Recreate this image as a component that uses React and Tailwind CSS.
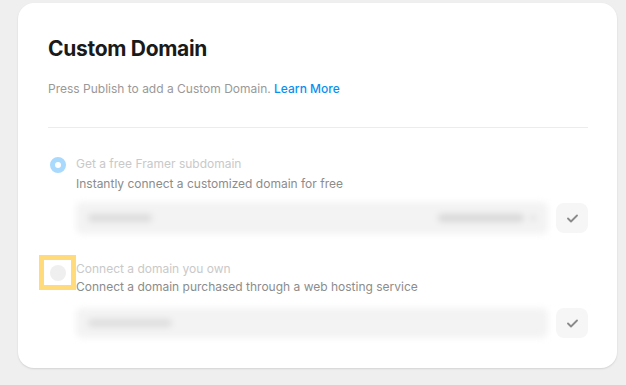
const CheckButton = () => (
  <button className="w-[32px] h-[30px] rounded-lg bg-[#f6f6f6] flex items-center justify-center text-[#8a8a8a] shrink-0">
    <svg width="11" height="9" viewBox="0 0 11 9" fill="none">
      <path d="M1 4.5L4 7.5L10 1.5" stroke="currentColor" strokeWidth="1.8" strokeLinecap="round" strokeLinejoin="round" />
    </svg>
  </button>
);

const App = () => {
  return (
    <div
      className="w-[626px] h-[385px] bg-[#efefef] pt-[3px] pl-[18px]"
      style={{ fontFamily: "Inter, 'Noto Sans', sans-serif" }}
    >
      <div className="w-[599px] h-[365px] bg-white rounded-2xl shadow-[0_1px_2px_rgba(0,0,0,0.12)] pl-[30px] pr-[29px] pt-[32px]">
        {/* Header */}
        <h1 className="text-[21px] leading-[28px] font-bold text-[#1a1a1a] tracking-[-0.3px]">
          Custom Domain
        </h1>
        <p className="mt-[18px] text-[12px] leading-[16px] text-[#999]">
          Press Publish to add a Custom Domain.{" "}
          <span className="text-[#0a8ff0] font-medium">Learn More</span>
        </p>
        <div className="mt-[30px] h-px bg-[#ececec]" />

        {/* Option 1 */}
        <div className="mt-[28px] flex gap-[11px]">
          <div className="w-[17px] ml-[1px] flex justify-center pt-[1px] shrink-0">
            <div className="w-[16px] h-[16px] rounded-full border-[5px] border-[#a9d9fc] bg-white" />
          </div>
          <div className="flex-1 -ml-[1px]">
            <div className="text-[12px] leading-[16px] text-[#c9c9c9]">
              Get a free Framer subdomain
            </div>
            <div className="mt-[4px] text-[12px] leading-[16px] text-[#8c8c8c]">
              Instantly connect a customized domain for free
            </div>
            <div className="mt-[10px] flex gap-[8px] items-center">
              <div className="flex-1 h-[32px] rounded-md bg-[#f3f3f3] blur-[3px] flex items-center justify-between px-[12px]">
                <span className="w-[64px] h-[8px] rounded bg-[#dcdcdc]" />
                <span className="flex items-center gap-[6px]">
                  <span className="w-[86px] h-[8px] rounded bg-[#d8d8d8]" />
                  <span className="w-[6px] h-[6px] rounded bg-[#e0e0e0]" />
                </span>
              </div>
              <CheckButton />
            </div>
          </div>
        </div>

        {/* Option 2 */}
        <div className="mt-[27px] flex gap-[11px]">
          <div className="w-[17px] ml-[1px] flex justify-center shrink-0">
            <div className="-mt-[6px] w-[37px] h-[35px] shrink-0 border-[5px] border-[#ffdb7c] flex items-center justify-center">
              <div className="w-[16px] h-[16px] rounded-full bg-[#efefef]" />
            </div>
          </div>
          <div className="flex-1 -ml-[1px]">
            <div className="text-[12px] leading-[16px] text-[#c9c9c9]">
              Connect a domain you own
            </div>
            <div className="mt-[2px] text-[12px] leading-[16px] text-[#8c8c8c]">
              Connect a domain purchased through a web hosting service
            </div>
            <div className="mt-[13px] flex gap-[8px] items-center">
              <div className="flex-1 h-[30px] rounded-md bg-[#f3f3f3] blur-[3px] flex items-center px-[12px]">
                <span className="w-[84px] h-[8px] rounded bg-[#dedede]" />
              </div>
              <CheckButton />
            </div>
          </div>
        </div>
      </div>
    </div>
  );
};

export default App;
